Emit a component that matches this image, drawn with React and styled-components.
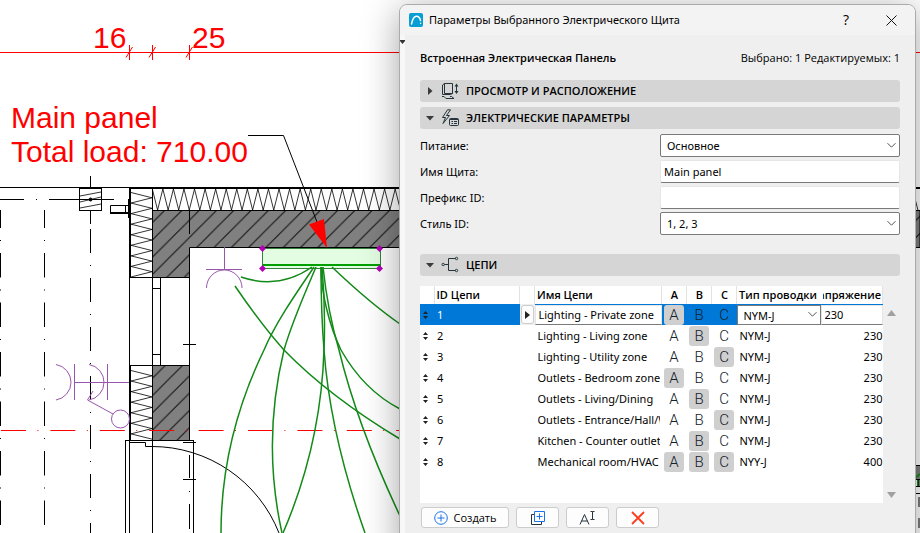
import { useState } from "react";
import styled, { createGlobalStyle } from "styled-components";

const GlobalStyle = createGlobalStyle`
  * {
    box-sizing: border-box;
  }
  body {
    margin: 0;
    background: #ffffff;
    color: #000000;
    font-family: "Open Sans", "Noto Sans", sans-serif;
    font-size: 11px;
    line-height: 16px;
  }
  button, input, select {
    font: inherit;
    color: inherit;
    margin: 0;
  }
`

const Workspace = styled.div`
  position: relative;
  display: grid;
  grid-template-columns: 399px minmax(0, 1fr);
  height: 100vh;
  padding: 4px 4px 0 0;
  overflow: hidden;
`
const Plan = styled.svg`
  position: absolute;
  inset: 0;
  width: 100%;
  height: 100%;
  text {
    font-family: "Liberation Sans", sans-serif;
    font-size: 30px;
    fill: #ff0000;
  }
`
const Dialog = styled.section`
  position: relative;
  grid-column: 2;
  display: flex;
  flex-direction: column;
  min-height: 560px;
  background: #efefef;
  border: 1px solid #ababab;
  border-radius: 8px;
  box-shadow: 0 6px 36px rgba(0, 0, 0, 0.36);
  overflow: hidden;
`
const TitleBar = styled.header`
  display: flex;
  align-items: center;
  height: 30px;
  padding: 0 16px 0 9px;
  gap: 6px;
  background: #f3f3f3;
`
const Title = styled.h1`
  flex: 1;
  margin: 0;
  font-family: "Noto Sans", sans-serif;
  font-size: 11px;
  font-weight: 400;
  white-space: nowrap;
`
const WindowButton = styled.button`
  display: flex;
  align-items: center;
  justify-content: center;
  width: 16px;
  height: 24px;
  margin-left: 23px;
  padding: 0;
  border: none;
  background: none;
  font-size: 14px;
`
const Body = styled.div`
  flex: 1;
  display: flex;
  flex-direction: column;
  padding: 15px 15px 0 15px;
  border-left: 5px solid #f7f7f7;
`
const EdgeMarker = styled.svg`
  position: absolute;
  left: 0;
  top: 35px;
`
const Summary = styled.div`
  display: flex;
  justify-content: space-between;
  margin-bottom: 14px;
  line-height: 16px;
  white-space: nowrap;
  b {
    font-weight: 600;
  }
`
const Bar = styled.button`
  display: flex;
  align-items: center;
  gap: 7px;
  width: 100%;
  height: 22px;
  margin-bottom: 5px;
  padding: 0 6px;
  border: none;
  border-radius: 3px;
  background: #d5d5d5;
  font-weight: 600;
  text-align: left;
`
const Form = styled.div`
  display: grid;
  grid-template-columns: 1fr 1fr;
  row-gap: 3px;
  margin-bottom: 19px;
  font-family: "Noto Sans", sans-serif;
`
const Label = styled.label`
  line-height: 23px;
`
const Picker = styled.div`
  display: grid;
  align-items: center;
  > * {
    grid-area: 1 / 1;
  }
  svg {
    justify-self: end;
    margin-right: 3px;
    pointer-events: none;
  }
`
const Select = styled.select`
  appearance: none;
  width: 100%;
  height: ${({ $small }) => ($small ? 20 : 23)}px;
  padding: 0 6px;
  border: 1px solid #7a7a7a;
  border-radius: ${({ $small }) => ($small ? 0 : 2)}px;
  background: #ffffff;
`
const Input = styled.input`
  width: 100%;
  height: ${({ $small }) => ($small ? 20 : 23)}px;
  padding: 0 3px;
  border: 1px solid #e6e6e6;
  border-bottom-color: #7a7a7a;
  border-radius: ${({ $small }) => ($small ? 0 : 2)}px;
  background: #ffffff;
`
const ListArea = styled.div`
  display: grid;
  grid-template-columns: 1fr 17px;
  margin-top: 5px;
  margin-bottom: 4px;
`
const ListBox = styled.div`
  min-height: 217px;
  background: #ffffff;
`
const Scroller = styled.div`
  display: flex;
  flex-direction: column;
  justify-content: space-between;
  align-items: center;
  padding: 24px 0 5px;
`
const Table = styled.table`
  width: 100%;
  table-layout: fixed;
  border-collapse: collapse;
`
const Th = styled.th`
  height: 18px;
  padding: 0 1px 0 2px;
  border-right: ${({ $line = true }) => ($line ? "1px solid #e2e2e2" : "none")};
  font-weight: 600;
  text-align: ${({ $align }) => $align || "left"};
  white-space: nowrap;
  overflow: hidden;
`
const ClippedLeft = styled.div`
  display: flex;
  justify-content: flex-end;
  overflow: hidden;
`
const Tr = styled.tr`
  background: ${({ $selected }) => ($selected ? "#0078d7" : "transparent")};
`
const Td = styled.td`
  height: 21px;
  padding: ${({ $flush }) => ($flush ? 0 : "0 2px 0 3px")};
  background: ${({ $plain }) => ($plain ? "#efefef" : "transparent")};
  color: ${({ $light }) => ($light ? "#ffffff" : "inherit")};
  font-family: "Noto Sans", sans-serif;
  text-align: ${({ $align }) => $align || "left"};
  line-height: 20px;
  white-space: nowrap;
  overflow: hidden;
  > svg {
    display: block;
  }
`
const Name = styled.div`
  overflow: hidden;
`
const Phase = styled.button`
  display: block;
  width: 20px;
  height: 20px;
  margin: 0 auto;
  padding: 0;
  border: none;
  border-radius: 3px;
  background: ${({ $on }) => ($on ? "#cfcfcf" : "transparent")};
  color: #14222a;
  font-family: Roboto, sans-serif;
  font-size: 15px;
  font-weight: 300;
  line-height: 20px;
  text-align: center;
`
const Expand = styled.button`
  display: flex;
  align-items: center;
  justify-content: center;
  width: 13px;
  height: 19px;
  margin: 0 auto;
  padding: 0;
  border: 1px solid #cccccc;
  border-radius: 3px;
  background: #fdfdfd;
`
const Actions = styled.div`
  display: flex;
  gap: 7px;
  padding: 0 1px;
`
const Action = styled.button`
  display: flex;
  align-items: center;
  justify-content: center;
  gap: 6px;
  width: ${({ $wide }) => ($wide ? 88 : 43)}px;
  height: 21px;
  padding: 0;
  border: 1px solid #cccccc;
  border-radius: 3px;
  background: #fdfdfd;
`

const circuits = [
  { id: 1, name: "Lighting - Private zone", on: "A", wire: "NYM-J", volt: 230 },
  { id: 2, name: "Lighting - Living zone", on: "B", wire: "NYM-J", volt: 230 },
  { id: 3, name: "Lighting - Utility zone", on: "C", wire: "NYM-J", volt: 230 },
  { id: 4, name: "Outlets - Bedroom zone", on: "A", wire: "NYM-J", volt: 230 },
  { id: 5, name: "Outlets - Living/Dining", on: "B", wire: "NYM-J", volt: 230 },
  { id: 6, name: "Outlets - Entrance/Hall/WC", on: "C", wire: "NYM-J", volt: 230 },
  { id: 7, name: "Kitchen - Counter outlets", on: "B", wire: "NYM-J", volt: 230 },
  { id: 8, name: "Mechanical room/HVAC", on: "ABC", wire: "NYY-J", volt: 400 },
];

const zigzag = (start, end, draw) => {
  const points = [];
  for (let p = start, side = 0; p < end; p += 5.28, side = 1 - side) {
    points.push(draw(p, side));
  }
  return points.join(" ");
};

const Chevron = () => (
  <svg width="11" height="7" viewBox="0 0 11 7" fill="none" stroke="#555">
    <path d="M1.5 1.2 5.5 5.2 9.5 1.2" />
  </svg>
);

const Fold = ({ open }) => (
  <svg width="8" height="8" viewBox="0 0 8 8" fill="#3a3a3a">
    <path d={open ? "M0 2H8L4 6.5Z" : "M2 0V8L6.5 4Z"} />
  </svg>
);

const ViewIcon = () => (
  <svg width="18" height="18" viewBox="0 0 18 18" fill="none" stroke="#26343b">
    <path d="M3.5 1.5H11.5V11.5H3.5ZM3.5 1.5 1.5 3V12.5H9.500L11.500 11.500M1 14.5H3L5 16.5H13L10.500 14.500H9M15.500 3V10" />
    <path d="M13.500 4.5 15.500 1.500 17.500 4.5ZM13.500 9 15.500 12 17.500 9Z" fill="#26343b" stroke="none" />
  </svg>
);

const PowerIcon = () => (
  <svg width="18" height="18" viewBox="0 0 18 18" fill="none" stroke="#26343b">
    <path d="M6.5.8 1.5 8.5H4.5L2 14.5 8.5 6.5H5.5L9.5.8Z" />
    <rect x="8.5" y="9.5" width="9" height="7" rx="1" />
    <path d="M9 10.500H17M10.5 12.5H12M13 12.5H16M10.5 14.5H12M13 14.5H16" />
  </svg>
);

const TreeIcon = () => (
  <svg width="18" height="18" viewBox="0 0 18 18" fill="none" stroke="#26343b">
    <path d="M3.500 8.5H7.5M14.500 2.5H7.5V14.5H14.500" />
    <circle cx="2.200" cy="8.5" r="1.2" />
    <circle cx="15.500" cy="2.5" r="1.2" />
    <circle cx="15.500" cy="14.5" r="1.2" />
  </svg>
);

const Grip = () => (
  <svg width="6" height="10" viewBox="0 0 6 10" fill="#222">
    <path d="M0 4 2.500 1 5 4ZM0 6 2.500 9 5 6Z" />
  </svg>
);

const cables = [
  "M241 277Q279 290 312 267",
  "M235 286C250 308 266 330 284 350C320 387 360 415 400 439",
  "M314 267C297 292 276 322 264 350C236 408 221 470 221 533",
  "M316 267C305 293 292 322 284 350C270 408 268 470 282 533",
  "M321 267C321 300 322 325 324 350C322 412 308 475 283 533",
  "M322 267C325 300 325 325 324 350C328 405 341 465 365 533",
  "M323 267C326 295 331 323 339 350C352 404 376 465 400 516",
  "M321 267C321 292 329 325 341 350C354 373 373 395 400 409",
  "M332 267C354 288 377 308 400 324",
];

const FloorPlan = () => (
  <Plan fill="none" stroke="#000">
    <defs>
      <pattern id="hatch" width="17.3" height="17.3" x="152" y="211" patternUnits="userSpaceOnUse">
        <rect width="17.3" height="17.3" fill="#808080" stroke="none" />
        <path d="M-2 14 14 -2M-2 31.3 31.3 -2" stroke="#111" />
      </pattern>
    </defs>

    {/* walls */}
    <path d="M152.5 210.5H920V247.5H189.5V277.5H152.5Z" fill="url(#hatch)" />
    <rect x="152.5" y="365.5" width="37" height="75" fill="url(#hatch)" />
    <path d="M189.5 210V234M189.5 277V365M129.5 277V365M130 277.5H153M152.5 188V533M160.5 277V365M153 288.5H160M153 354.5H160M183 344.5H196" />
    <path d="M129 188H920M130 188V278M130 365V441" strokeWidth="2" />
    <path d="M0 187.5H129M130 365.5H153M125 440.5H194M125.5 440V533M129.5 440V533M193.5 440V533M183 442.5H196M183 479.5H196M130 442.5H145.500V446.500H152" />
    <path d="M152 446.500A136.500 136.500 0 0 1 279 533" />
    <polyline strokeWidth=".8" points={zigzag(192.5, 277, (p, s) => `${s ? 152 : 131},${p}`)} />
    <polyline strokeWidth=".8" points={zigzag(370.5, 440, (p, s) => `${s ? 152 : 131},${p}`)} />
    <polyline strokeWidth=".8" points={zigzag(152.3, 920, (p, s) => `${p},${s ? 210 : 189}`)} />

    {/* axes and the column */}
    <path d="M.5 210V228M44.500 210V228M90.5 176V187M90.5 211V224M0 199.500H24M36 199.500H37M49 199.500H114" />
    <path d="M.5 253V533M44.500 253V533" strokeDasharray="24.5 12 1 12" />
    <path d="M.5 240V241M44.500 240V241M189.5 455V478M189.5 491V492M189.5 504V529" />
    <path d="M90.5 229V533" strokeDasharray="24 12 1 12" />
    <rect x="79.5" y="188.500" width="22" height="22" />
    <path d="M80 196 101 192M80 202 101 197M80 208 101 204" strokeWidth=".8" />
    <circle cx="90.5" cy="199.500" r="1.500" fill="#000" />
    <path d="M129 205.500H110.500V213H129M125.500 205V213M128.500 199V218" />
    <path d="M110 213H129" strokeWidth="2" />

    {/* dimension line */}
    <g stroke="#f00">
      <path d="M0 52.500H920M129.500 45V60M152.500 45V60M189.500 45V60M126 57.500 132.500 47M149 57.500 155.500 47M186 57.500 192.500 47" />
      <path d="M1 430.500H400" strokeDasharray="25 11.400 1 12" />
    </g>
    <g stroke="none">
      <text x="93" y="48">16</text>
      <text x="192" y="48">25</text>
      <text x="11" y="128">Main panel</text>
      <text x="11" y="162">Total load: 710.00</text>
    </g>

    {/* sockets and switch */}
    <g stroke="#9855ad">
      <path d="M74 382.500H129M74.500 364V400M107.500 364V400M56 364.500A18 18 0 0 1 56 400M89 364.500A18 18 0 0 1 89 400M93 391 87.500 400 113 414" />
      <circle cx="120.500" cy="419" r="9" />
      <path d="M224.500 247V269M206 269.500H242M206.500 288A17.700 18 0 0 1 242 288" />
    </g>

    {/* electric panel with its cables */}
    <path d="M248 135.500H283.500L317 222" />
    <rect x="262.500" y="248.500" width="118" height="20" fill="#e3fde3" stroke="#31823a" />
    <path d="M263 265H380" stroke="#00a000" strokeWidth="2" />
    <g stroke="#128a18" strokeWidth="1.500">
      {cables.map((d) => (
        <path key={d} d={d} />
      ))}
    </g>
    <path d="M309 224.500 324 219 327 248Z" fill="#f00" stroke="none" />
    <g fill="#b400b4" stroke="none">
      {[[262.5, 248.5], [379.5, 248.5], [262.5, 268.5], [379.5, 268.5]].map(([x, y]) => (
        <path key={`${x}-${y}`} d={`M${x - 3.5} ${y}l3.500-3.500 3.500 3.500-3.500 3.500z`} />
      ))}
    </g>

    {/* far end of the building */}
    <rect x="905" y="465.500" width="20" height="14" fill="#808080" />
    <path d="M915 478 920 474M918 480V486" stroke="#128a18" strokeWidth="2" />
    <path d="M910 486.500H920M910 493.500H920M919 479V486M919 497V507M919 518V528" />
  </Plan>
);

const CircuitRow = ({ circuit, selected }) => (
  <Tr $selected={selected}>
    <Td><Grip /></Td>
    <Td $light={selected}>{circuit.id}</Td>
    <Td $flush $plain={selected}>
      {selected && (
        <Expand aria-label="Expand">
          <svg width="5" height="8" viewBox="0 0 5 8"><path d="M0 0V8L5 4Z" fill="#222" /></svg>
        </Expand>
      )}
    </Td>
    <Td $flush={selected}>
      {selected ? <Input $small aria-label="Имя Цепи" defaultValue={circuit.name} /> : <Name>{circuit.name}</Name>}
    </Td>
    {["A", "B", "C"].map((phase) => (
      <Td key={phase} $flush>
        <Phase $on={circuit.on.includes(phase)} aria-pressed={circuit.on.includes(phase)}>{phase}</Phase>
      </Td>
    ))}
    <Td $flush={selected}>
      {selected ? (
        <Picker>
          <Select $small aria-label="Тип проводки">
            <option>{circuit.wire}</option>
          </Select>
          <Chevron />
        </Picker>
      ) : circuit.wire}
    </Td>
    <Td $flush $align="right">
      {selected ? <Input $small aria-label="Напряжение" defaultValue={circuit.volt} /> : circuit.volt}
    </Td>
  </Tr>
);

const App = () => {
  const [panelName, setPanelName] = useState("Main panel");

  return (
    <Workspace>
      <GlobalStyle />
      <FloorPlan />
      <Dialog role="dialog" aria-labelledby="dialog-title">
        <TitleBar>
          <svg width="14" height="14" viewBox="0 0 14 14" fill="none">
            <rect width="14" height="14" rx="2" fill="#079fd3" />
            <path d="M2.500 11C3.500 6 5.500 3.200 7.500 3.200C9.500 3.200 11 5 11.500 7.500" stroke="#fff" strokeWidth="1.500" strokeLinecap="round" />
            <circle cx="11.600" cy="10.200" r=".8" fill="#fff" />
          </svg>
          <Title id="dialog-title">Параметры Выбранного Электрического Щита</Title>
          <WindowButton aria-label="Help">?</WindowButton>
          <WindowButton aria-label="Close">
            <svg width="11" height="11" viewBox="0 0 11 11" stroke="#111"><path d="M.5.5 10.500 10.500M10.500.5.5 10.500" /></svg>
          </WindowButton>
        </TitleBar>
        <EdgeMarker width="5" height="4" viewBox="0 0 5 4"><path d="M0 0H5V1L2.500 4 0 1Z" fill="#333" /></EdgeMarker>
        <Body>
          <Summary>
            <b>Встроенная Электрическая Панель</b>
            <span>Выбрано: 1 Редактируемых: 1</span>
          </Summary>
          <Bar aria-expanded="false"><Fold /><ViewIcon />ПРОСМОТР И РАСПОЛОЖЕНИЕ</Bar>
          <Bar aria-expanded="true"><Fold open /><PowerIcon />ЭЛЕКТРИЧЕСКИЕ ПАРАМЕТРЫ</Bar>
          <Form>
            <Label htmlFor="supply">Питание:</Label>
            <Picker>
              <Select id="supply"><option>Основное</option></Select>
              <Chevron />
            </Picker>
            <Label htmlFor="name">Имя Щита:</Label>
            <Input id="name" value={panelName} onChange={(e) => setPanelName(e.target.value)} />
            <Label htmlFor="prefix">Префикс ID:</Label>
            <Input id="prefix" />
            <Label htmlFor="style">Стиль ID:</Label>
            <Picker>
              <Select id="style"><option>1, 2, 3</option></Select>
              <Chevron />
            </Picker>
          </Form>
          <Bar aria-expanded="true"><Fold open /><TreeIcon />ЦЕПИ</Bar>
          <ListArea>
            <ListBox>
              <Table>
                <colgroup>
                  <col width="14" />
                  <col />
                  <col width="15" />
                  <col width="127" />
                  <col width="25" />
                  <col width="25" />
                  <col width="25" />
                  <col width="84" />
                  <col width="62" />
                </colgroup>
                <thead>
                  <tr>
                    <Th />
                    <Th>ID Цепи</Th>
                    <Th />
                    <Th>Имя Цепи</Th>
                    <Th $align="center">A</Th>
                    <Th $align="center">B</Th>
                    <Th $align="center">C</Th>
                    <Th $line={false}>Тип проводки</Th>
                    <Th><ClippedLeft>Напряжение</ClippedLeft></Th>
                  </tr>
                </thead>
                <tbody>
                  {circuits.map((circuit, index) => (
                    <CircuitRow key={circuit.id} circuit={circuit} selected={index === 0} />
                  ))}
                </tbody>
              </Table>
            </ListBox>
            <Scroller>
              <svg width="9" height="6" viewBox="0 0 9 6" fill="#a0a0a0"><path d="M0 6 4.500 0 9 6Z" /></svg>
              <svg width="9" height="6" viewBox="0 0 9 6" fill="#a0a0a0"><path d="M0 0H9L4.500 6Z" /></svg>
            </Scroller>
          </ListArea>
          <Actions>
            <Action $wide>
              <svg width="14" height="14" viewBox="0 0 14 14" fill="none" stroke="#1a73e8">
                <circle cx="7" cy="7" r="6.300" />
                <path d="M7 3.500V10.500M3.500 7H10.500" />
              </svg>
              Создать
            </Action>
            <Action aria-label="Duplicate">
              <svg width="14" height="14" viewBox="0 0 14 14" fill="none">
                <path d="M3 3.500H.5V13.500H10.500V11" stroke="#26343b" />
                <path d="M3.500.5H13.500V10.500H3.500ZM8.500 2.500V8.500M5.500 5.500H11.500" stroke="#1a73e8" />
              </svg>
            </Action>
            <Action aria-label="Rename">
              <svg width="17" height="14" viewBox="0 0 17 14" fill="none" stroke="#26343b">
                <path d="M1 13.500 5.500 3.500 10 13.500M2.500 10H8.500M11.500.5H13.500V8.500H11.500M15.500.5H13.500M15.500 8.500H13.500" />
              </svg>
            </Action>
            <Action aria-label="Delete">
              <svg width="14" height="14" viewBox="0 0 14 14" stroke="#ff3b1f" strokeWidth="1.800"><path d="M1 1 13 13M13 1 1 13" /></svg>
            </Action>
          </Actions>
        </Body>
      </Dialog>
    </Workspace>
  );
};

export default App;
